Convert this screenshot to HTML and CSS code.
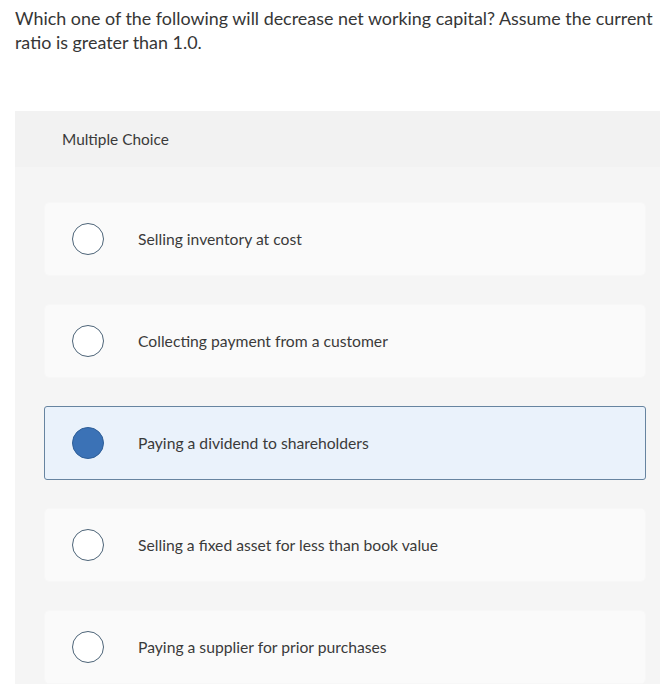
FILE: index.html
```html
<!DOCTYPE html>
<html>
<head>
<meta charset="utf-8">
<link rel="stylesheet" href="styles.css">
</head>
<body>
<p class="question">Which one of the following will decrease net working capital? Assume the current ratio is greater than 1.0.</p>
<section class="panel">
  <div class="panel-head">Multiple Choice</div>
  <div class="panel-body">
    <div class="option"><span class="radio"></span><span class="label">Selling inventory at cost</span></div>
    <div class="option"><span class="radio"></span><span class="label">Collecting payment from a customer</span></div>
    <div class="option selected"><span class="radio"></span><span class="label">Paying a dividend to shareholders</span></div>
    <div class="option"><span class="radio"></span><span class="label">Selling a fixed asset for less than book value</span></div>
    <div class="option"><span class="radio"></span><span class="label">Paying a supplier for prior purchases</span></div>
  </div>
</section>
</body>
</html>
```
FILE: styles.css
```css
html, body {
  margin: 0;
  padding: 0;
  background: #fff;
}
body {
  padding-left: 15px;
  font-family: "Lato", "Open Sans", sans-serif;
  color: #3a3a3a;
  overflow: hidden;
  height: 684px;
}
.question {
  margin: 0;
  padding-top: 6px;
  padding-right: 2px;
  font-size: 17.9px;
  line-height: 24px;
  color: #363636;
}
.panel {
  margin-top: 57px;
}
.panel-head {
  height: 56px;
  background: #f2f2f2;
  padding-left: 47px;
  display: flex;
  align-items: center;
  font-size: 15.4px;
  color: #3a3a3a;
}
.panel-body {
  background: #f5f5f5;
  padding: 35px 14px 0 29px;
  display: flex;
  flex-direction: column;
  gap: 28px;
}
.option {
  height: 74px;
  flex: none;
  box-sizing: border-box;
  background: #fafafa;
  border: 1px solid #f7f7f7;
  border-radius: 5px;
  display: flex;
  align-items: center;
  padding-left: 27px;
  font-size: 15.7px;
  color: #3a3a3a;
}
.radio {
  width: 30px;
  height: 30px;
  border: 1px solid #4d6478;
  border-radius: 50%;
  background: #fff;
  flex: none;
  margin-right: 34px;
}
.option.selected {
  background: #eaf2fb;
  border-color: #6784a0;
  border-radius: 3px;
}
.option.selected .radio {
  background: #3b72b6;
  border-color: #2f5f98;
}
```
